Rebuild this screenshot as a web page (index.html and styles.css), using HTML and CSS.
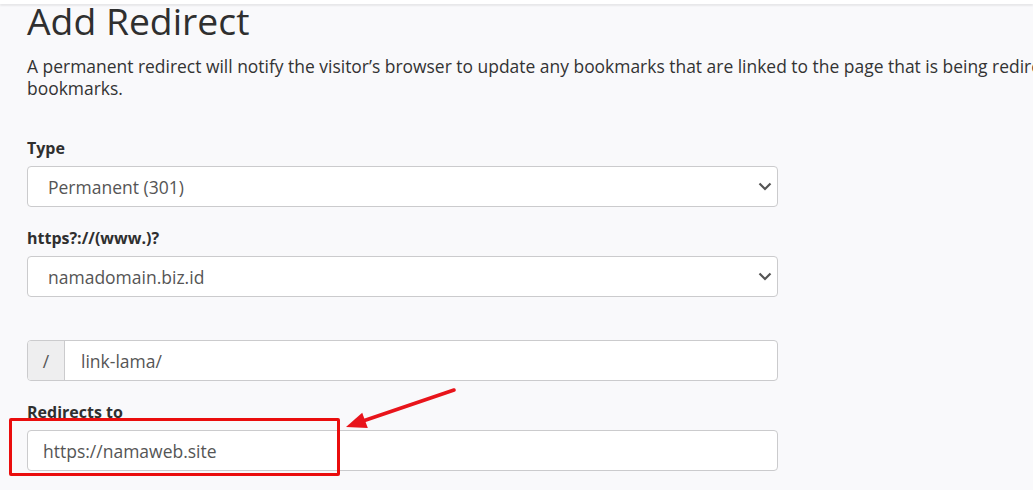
FILE: index.html
```html
<!DOCTYPE html>
<html lang="en">
<head>
<meta charset="utf-8">
<title>Add Redirect</title>
<link rel="stylesheet" href="styles.css">
</head>
<body>
<div class="topbar"></div>
<main class="page">
  <h1 class="title">Add Redirect</h1>
  <p class="intro">A permanent redirect will notify the visitor’s browser to update any bookmarks that are linked to the page that is being redirected. A temporary redirect will not update the visitor’s<br>bookmarks.</p>

  <div class="field field-first">
    <label class="label">Type</label>
    <div class="control select">
      <span class="value">Permanent (301)</span>
      <svg class="chev" width="14" height="9" viewBox="0 0 14 9"><path d="M1.5 1.5 L7 7 L12.5 1.5" fill="none" stroke="#555" stroke-width="2.2"/></svg>
    </div>
  </div>

  <div class="field">
    <label class="label">https?://(www.)?</label>
    <div class="control select">
      <span class="value">namadomain.biz.id</span>
      <svg class="chev" width="14" height="9" viewBox="0 0 14 9"><path d="M1.5 1.5 L7 7 L12.5 1.5" fill="none" stroke="#555" stroke-width="2.2"/></svg>
    </div>
  </div>

  <div class="field field-group">
    <div class="control group">
      <span class="addon">/</span>
      <span class="group-value">link-lama/</span>
    </div>
  </div>

  <div class="field field-last">
    <label class="label">Redirects to</label>
    <div class="control input">
      <span class="input-value">https://namaweb.site</span>
    </div>
  </div>

  <div class="highlight"></div>
  <svg class="arrow" width="130" height="60" viewBox="0 0 130 60">
    <line x1="124" y1="6" x2="30" y2="38" stroke="#e8141b" stroke-width="3.6" stroke-linecap="round"/>
    <polygon points="16,43 32.2,28.8 37.8,44" fill="#e8141b"/>
  </svg>
</main>
</body>
</html>
```
FILE: styles.css
```css
html, body {
  margin: 0;
  padding: 0;
  overflow: hidden;
}
body {
  background: #f9f9fb;
  font-family: "Open Sans", "Liberation Sans", sans-serif;
  color: #333;
  width: 1033px;
  height: 490px;
  position: relative;
}
.topbar {
  position: absolute;
  left: 0;
  top: 0;
  width: 100%;
  height: 4px;
  background: #fff;
  box-shadow: 0 2px 2px rgba(0,0,0,0.07);
  z-index: 2;
}
.page {
  padding: 1px 0 0 27px;
  position: relative;
}
.title {
  margin: 0;
  font-size: 37.3px;
  line-height: 40px;
  font-weight: 400;
  color: #2f2f2f;
}
.intro {
  margin: 14px 0 0 0;
  font-size: 17.45px;
  line-height: 22px;
  white-space: nowrap;
  color: #333;
}
.field {
  width: 751px;
  margin-top: 20px;
}
.field-first {
  margin-top: 38px;
}
.field-group {
  margin-top: 43px;
}
.label {
  display: block;
  font-weight: 700;
  font-size: 16px;
  line-height: 22px;
  margin-bottom: 7px;
  color: #2f2f2f;
}
.control {
  box-sizing: border-box;
  height: 41px;
  border: 1px solid #cbcbcd;
  border-radius: 4px;
  background: #fff;
  display: flex;
  align-items: center;
  font-size: 17.5px;
  color: #555;
}
.select {
  padding: 0 5px 0 20px;
  justify-content: space-between;
}
.group {
  overflow: hidden;
}
.addon {
  width: 36px;
  align-self: stretch;
  background: #eeeeef;
  border-right: 1px solid #cbcbcd;
  display: flex;
  align-items: center;
  justify-content: center;
  color: #555;
}
.group-value {
  padding-left: 16px;
}
.input {
  padding-left: 15px;
}
.highlight {
  position: absolute;
  left: 9px;
  top: 418px;
  width: 325px;
  height: 52px;
  border: 3.5px solid #ea0d0d;
  border-radius: 2px;
}
.arrow {
  position: absolute;
  left: 330px;
  top: 384px;
}
```
